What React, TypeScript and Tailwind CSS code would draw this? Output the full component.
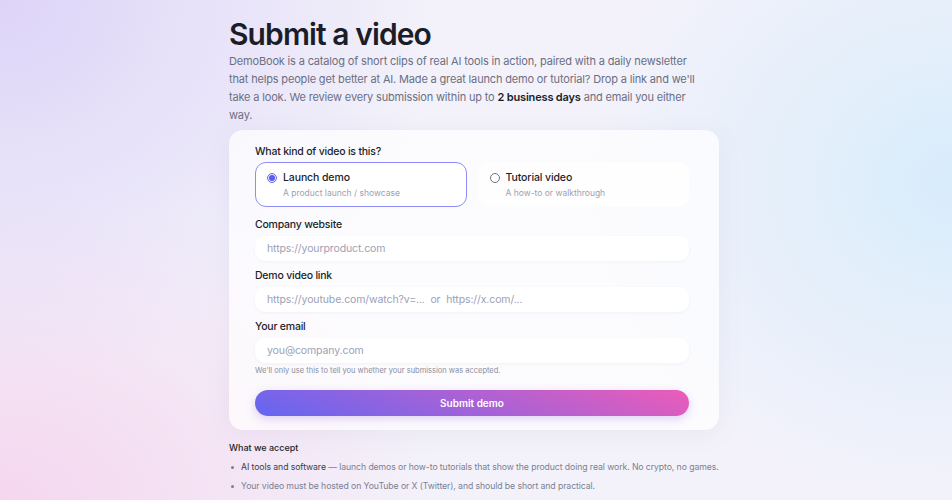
import { useState } from "react";

const kinds = [
    { id: "launch", title: "Launch demo", hint: "A product launch / showcase" },
    { id: "tutorial", title: "Tutorial video", hint: "A how-to or walkthrough" },
];

function Field({ label, placeholder }: { label: string; placeholder: string }) {
    return (
        <div className="flex flex-col gap-[4px]">
            <label className="text-[10.5px] leading-[14px] font-medium tracking-[-0.02em] text-[#1d1f2b]">{label}</label>
            <input
                className="h-[25px] w-full rounded-[10px] bg-white px-[12px] text-[10.5px] tracking-[-0.01em] text-[#1d1f2b] placeholder:text-[#9ba1b6] shadow-[0_1px_3px_rgba(80,80,140,0.06)] outline-none"
                placeholder={placeholder}
            />
        </div>
    );
}

export default function App() {
    const [kind, setKind] = useState("launch");

    return (
        <div
            className="min-h-screen w-full flex justify-center bg-[#f3f2fa] bg-[radial-gradient(ellipse_440px_380px_at_0%_0%,#ddd4f8,transparent),radial-gradient(ellipse_360px_320px_at_100%_36%,#d8ecfb,transparent),radial-gradient(ellipse_440px_320px_at_0%_100%,#f5d6ef,transparent)]"
            style={{ fontFamily: "Inter, 'Noto Sans', sans-serif" }}
        >
            <div className="w-[494px] pr-[4px] pt-[16px] pb-[12px]">
                <h1 className="text-[30px] leading-[36px] font-semibold tracking-[-0.03em] text-[#1b1d29]">
                    Submit a video
                </h1>
                <p className="max-w-[472px] text-[11px] leading-[18px] tracking-[-0.015em] text-[#6b6f82]">
                    DemoBook is a catalog of short clips of real AI tools in action, paired with a daily newsletter
                    that helps people get better at AI. Made a great launch demo or tutorial? Drop a link and we'll
                    take a look. We review every submission within up to{" "}
                    <span className="font-semibold text-[#1b1d29]">2 business days</span> and email you either way.
                </p>

                <form className="mt-[6px] rounded-[14px] bg-white/70 pl-[26px] pr-[30px] pt-[15px] pb-[14px] shadow-[0_4px_24px_rgba(110,100,170,0.08)]">
                    <div className="text-[10.5px] leading-[14px] font-medium tracking-[-0.02em] text-[#1d1f2b]">
                        What kind of video is this?
                    </div>
                    <div className="mt-[3px] grid grid-cols-2 gap-[11px]">
                        {kinds.map((k) => {
                            const active = kind === k.id;
                            return (
                                <button
                                    key={k.id}
                                    type="button"
                                    onClick={() => setKind(k.id)}
                                    className={
                                        active
                                            ? "h-[45px] rounded-[11px] border border-[#8e8df5] bg-white px-[11px] text-left"
                                            : "h-[45px] rounded-[11px] border border-transparent bg-white/80 px-[11px] text-left"
                                    }
                                >
                                    <div className="flex items-center gap-[6px]">
                                        {active ? (
                                            <span className="flex h-[10px] w-[10px] items-center justify-center rounded-full border border-[#6d6cf0] bg-[#e4e4fd]">
                                                <span className="h-[6px] w-[6px] rounded-full bg-[#5b5bf0]" />
                                            </span>
                                        ) : (
                                            <span className="h-[10px] w-[10px] rounded-full border border-[#6f7282]" />
                                        )}
                                        <span className="text-[10.5px] leading-[14px] font-medium tracking-[-0.01em] text-[#1d1f2b]">
                                            {k.title}
                                        </span>
                                    </div>
                                    <div className="mt-[2px] pl-[16px] text-[8.5px] leading-[12px] text-[#9ca1b4]">{k.hint}</div>
                                </button>
                            );
                        })}
                    </div>

                    <div className="mt-[11px] flex flex-col gap-[8px]">
                        <Field label="Company website" placeholder="https://yourproduct.com" />
                        <Field label="Demo video link" placeholder="https://youtube.com/watch?v=...  or  https://x.com/..." />
                        <Field label="Your email" placeholder="you@company.com" />
                    </div>
                    <div className="mt-[3px] text-[7.5px] leading-[10px] text-[#8a8ea0]">
                        We'll only use this to tell you whether your submission was accepted.
                    </div>

                    <button
                        type="submit"
                        className="mt-[14px] h-[26px] w-full rounded-full bg-[linear-gradient(20deg,#6366f1_0%,#a762d6_50%,#ec5cb8_100%)] text-[10px] font-semibold text-white shadow-[0_3px_10px_rgba(140,90,220,0.25)]"
                    >
                        Submit demo
                    </button>
                </form>

                <div className="mt-[12px] text-[9px] leading-[12px] font-medium text-[#1d1f2b]">What we accept</div>
                <ul className="mt-[7px] flex flex-col gap-[7px] text-[8.7px] leading-[12px] tracking-[-0.01em] text-[#7b7f92]">
                    <li className="flex items-center gap-[7px] pl-[2px]">
                        <span className="h-[3px] w-[3px] shrink-0 rounded-full bg-[#7b7f92]" />
                        <span>
                            <span className="text-[#3a3d4d]">AI tools and software</span> — launch demos or how-to tutorials
                            that show the product doing real work. No crypto, no games.
                        </span>
                    </li>
                    <li className="flex items-center gap-[7px] pl-[2px]">
                        <span className="h-[3px] w-[3px] shrink-0 rounded-full bg-[#7b7f92]" />
                        <span>Your video must be hosted on YouTube or X (Twitter), and should be short and practical.</span>
                    </li>
                </ul>
            </div>
        </div>
    );
}
